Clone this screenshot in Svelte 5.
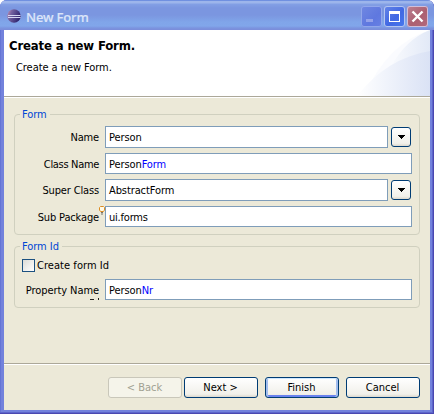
<script>
  let name = $state('Person');
  let superClass = $state('AbstractForm');
  let checked = $state(false);
</script>

{#snippet arrow()}
  <button class="drop" aria-label="Choose">
    <svg width="7" height="4" shape-rendering="crispEdges"><path d="M0 0h7v1H6v1H5v1H4v1H3V3H2V2H1V1H0z" /></svg>
  </button>
{/snippet}

<div class="window">
  <header class="titlebar">
    <svg class="logo" width="14" height="14" viewBox="0 0 14 14">
      <defs>
        <linearGradient id="orb" x1="0" x2="1" y1="0" y2=".4">
          <stop offset="0" stop-color="#d795ae" /><stop offset=".35" stop-color="#7462a0" /><stop offset="1" stop-color="#30256f" />
        </linearGradient>
      </defs>
      <circle cx="7" cy="7" r="6.7" fill="url(#orb)" />
      <path d="M1 6.5h12.5M1 8.5h12.5" stroke="#d5d6f2" stroke-width="1" />
    </svg>
    <span class="title">New Form</span>
    <div class="controls">
      <span class="ctl min"><svg width="21" height="21" shape-rendering="crispEdges"><path fill="#94a2ea" d="M5 13h7v3H5z" /></svg></span>
      <span class="ctl max"><svg width="21" height="21" shape-rendering="crispEdges"><path fill="#fff" fill-rule="evenodd" d="M5 5h11v11H5zM6 8v7h9V8z" /></svg></span>
      <span class="ctl close"><svg width="21" height="21"><path d="M5.5 5.5l10 10M15.5 5.5l-10 10" stroke="#fff" stroke-width="2.4" /></svg></span>
    </div>
  </header>

  <main>
    <section class="banner">
      <h1>Create a new Form.</h1>
      <p>Create a new Form.</p>
      <svg class="swoosh" width="75" height="66" viewBox="0 0 75 66">
        <defs>
          <linearGradient id="sw1"><stop offset="0" stop-color="#fff" /><stop offset="1" stop-color="#e2e9f7" /></linearGradient>
          <linearGradient id="sw2"><stop offset="0" stop-color="#fff" /><stop offset="1" stop-color="#dae2f5" /></linearGradient>
        </defs>
        <path d="M75 0Q33 13 9 66H75z" fill="#fafbfe" />
        <path d="M75 0Q51 9 35 38L26 66H75z" fill="url(#sw1)" />
        <path d="M75 21Q32 28 2 66H75z" fill="url(#sw2)" />
      </svg>
    </section>

    <section class="body">
      <div class="group form">
        <span class="legend">Form</span>
        <div class="row tall"><span class="label">Name</span><div class="field">{name}</div>{@render arrow()}</div>
        <div class="row"><span class="label tight">Class Name</span><div class="field">{name}<b>Form</b></div></div>
        <div class="row tall"><span class="label">Super Class</span><div class="field">{superClass}</div>{@render arrow()}</div>
        <div class="row">
          <span class="label">Sub Package</span>
          <svg class="bulb" width="6" height="9" viewBox="0 0 6 9"><path d="M1.5.5h3l1 1V4l-1 1.5h-3L.5 4V1.500z" fill="#fffbe8" stroke="#dc8c22" /><path d="M2 6.500h2M2 8h2" stroke="#77736a" /></svg>
          <div class="field tight">ui.forms</div>
        </div>
      </div>

      <div class="group id">
        <span class="legend">Form Id</span>
        <div class="check">
          <button class="box" aria-label="Create form Id" aria-pressed={checked} onclick={() => (checked = !checked)}></button>
          <span>Create form Id</span>
        </div>
        <div class="row prop">
          <span class="label wide">Property Name</span>
          <svg class="clip" width="10" height="2" shape-rendering="crispEdges"><path d="M0 1h4v1H0zM8 0h1v2H8z" fill="#222" /></svg>
          <div class="field">{name}<b>Nr</b></div>
        </div>
      </div>
    </section>

    <footer>
      <button class="btn disabled" disabled>&lt; Back</button>
      <button class="btn">Next &gt;</button>
      <button class="btn default">Finish</button>
      <button class="btn">Cancel</button>
    </footer>
  </main>
</div>

<style>
  :global(body) { background: #fff; overflow: hidden; }
  * { box-sizing: border-box; }
  .window {
    width: 434px; height: 414px; display: flex; flex-direction: column;
    padding: 0 4px 4px; border-radius: 7px 7px 0 0; background: #7382dc;
    box-shadow: inset -1px -1px #4a48b0, inset -2px -2px #5d65ca, inset 1px 0 #6575d5;
    font: 11px/14px "DejaVu Sans Condensed", "DejaVu Sans", sans-serif; font-stretch: condensed; color: #000;
  }
  .titlebar {
    height: 30px; flex: none; margin: 0 -4px; padding: 0 6px 0 7px; display: flex; align-items: flex-start;
    border-radius: 7px 7px 0 0;
    background: linear-gradient(#7090e0 0 1px, #9db5eb 1px 3px, #83a0e5 4px, #7b96e0 8px, #7b96e0 15px, #80a5e9 22px, #81a6ea 26px, #7b94df 28px, #7b8cda 30px);
  }
  .logo { margin-top: 9px; }
  .title { margin: 8px 0 0 5px; font: 500 13px/18px "Noto Sans", sans-serif; color: #dde6fa; letter-spacing: -.15px; -webkit-text-stroke: .2px #d7e2f8; }
  .controls { margin-left: auto; margin-top: 6px; display: flex; gap: 2px; }
  .ctl { width: 21px; height: 21px; border-radius: 3px; box-shadow: inset 0 0 0 1px #b4c5f0; }
  .ctl svg { display: block; }
  .min { background: linear-gradient(135deg, #7088e2, #5f78df 60%, #6880e4); box-shadow: inset 0 0 0 1px #92a7eb; }
  .max { background: linear-gradient(135deg, #6685e7, #4168e3 55%, #4779ef); }
  .close { background: linear-gradient(135deg, #bd8293, #ac6072 55%, #b3697c); box-shadow: inset 0 0 0 1px #d0bed9; }
  main { flex: 1; display: flex; flex-direction: column; background: #ece9d8; }
  .banner { height: 68px; flex: none; position: relative; background: #fff; border-bottom: 1px solid #fff; box-shadow: inset 0 -1px #aca899; }
  h1 { margin: 0; padding: 8px 0 0 5px; font: bold 13px/16px "DejaVu Sans Condensed", "DejaVu Sans", sans-serif; font-stretch: condensed; letter-spacing: -.15px; white-space: nowrap; }
  p { margin: 7px 0 0 12px; letter-spacing: -.06px; }
  .swoosh { position: absolute; right: 0; top: 0; }
  .body { flex: 1; padding: 16px 10px 0; }
  .group { position: relative; width: 406px; border: 1px solid #d0d0bf; border-radius: 4px; }
  .form { height: 121px; padding: 11px 0 0 7px; }
  .id { height: 62px; margin-top: 11px; padding: 12px 0 0 7px; }
  .legend { position: absolute; left: 5px; top: -7px; padding: 0 3px 0 2px; background: #ece9d8; color: #0046d5; letter-spacing: -.05px; }
  .row { position: relative; display: flex; width: 390px; height: 21px; margin-top: 5px; align-items: center; }
  .row.tall { height: 22px; }
  .row:nth-child(2) { margin-top: 0; }
  .label { width: 77px; margin-right: 6px; padding-top: 2px; text-align: right; letter-spacing: -.15px; white-space: nowrap; }
  .label.tight { letter-spacing: -.32px; }
  .label.wide { letter-spacing: -.07px; }
  .field { flex: 1; height: 100%; padding: 4px 3px 0; background: #fff; border: 1px solid #7f9db9; line-height: 13px; letter-spacing: -.1px; }
  .field.tight { letter-spacing: -.2px; }
  .field b { color: #00f; font-weight: normal; }
  .drop {
    width: 20px; height: 20px; margin: 0 1px 0 3px; padding: 0; display: flex; align-items: center; justify-content: center;
    border: 1px solid #003c74; border-radius: 3px; background: linear-gradient(#fff, #f1f0ea 85%, #dcd8cd);
  }
  .bulb { position: absolute; left: 77px; top: 0; }
  .clip { position: absolute; left: 68px; bottom: 0; }
  .check { display: flex; height: 13px; align-items: center; gap: 2px; letter-spacing: .05px; }
  .check span { padding-top: 1px; }
  .box { width: 13px; height: 13px; padding: 0; border: 1px solid #1c5180; background: linear-gradient(135deg, #dcdcd7, #fff); border-radius: 0; }
  .row.prop { margin-top: 7px; }
  footer {
    height: 47px; flex: none; display: flex; justify-content: flex-end; padding: 13px 10px 0 0;
    border-top: 1px solid #aca899; box-shadow: inset 0 1px #fff;
  }
  .btn {
    width: 74px; height: 21px; padding: 1px 1px 0 0; border: 1px solid #003c74; border-radius: 3px; font: inherit; font-stretch: inherit; color: #000;
    background: linear-gradient(#fff, #f1f0ea 85%, #dcd8cd);
  }
  .btn + .btn { margin-left: 7px; }
  .btn.disabled { color: #a1a192; border-color: #c9c7ba; background: #f5f4ea; }
  .btn.disabled + .btn { margin-left: 2px; }
  .btn.default { box-shadow: inset 0 1px #cee7ff, inset 2px 0 #a2bdee, inset -2px 0 #a2bdee, inset 0 -2px #6982ee; }
</style>
